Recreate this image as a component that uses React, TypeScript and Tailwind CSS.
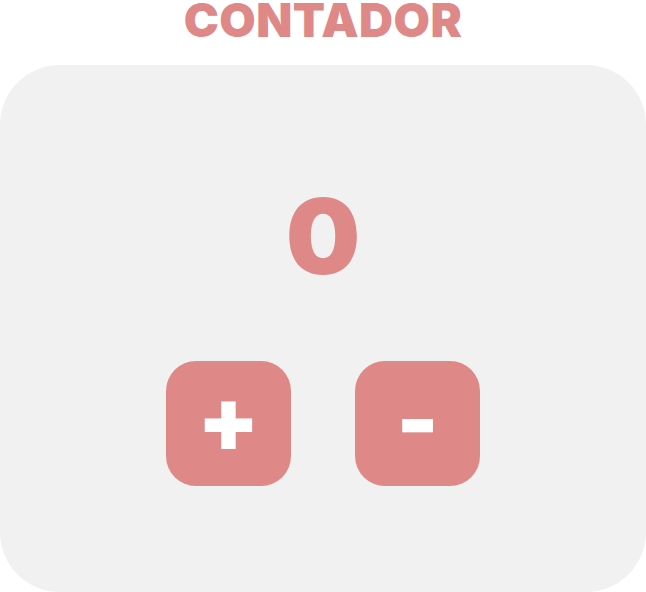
import { useState } from 'react'

export default function App() {
    const [count, setCount] = useState(0)

    return (
        <div className="flex flex-col items-center w-[646px] h-[592px] overflow-hidden bg-white font-['Inter',sans-serif] text-[#df8888]">
            <h1 className="text-[47px] font-black leading-[40px] tracking-[0.01em]">CONTADOR</h1>

            <div className="mt-[25px] w-full h-[527px] shrink-0 rounded-[60px] bg-[#f1f1f1] flex flex-col items-center">
                <div className="mt-[118px] text-[105px] font-black leading-[105px]">{count}</div>

                <div className="mt-[73px] flex gap-[64px]">
                    <button
                        onClick={() => setCount(count + 1)}
                        className="w-[125px] h-[125px] pb-[8px] rounded-[30px] bg-[#df8888] text-white text-[90px] font-black leading-none flex items-center justify-center"
                    >
                        +
                    </button>
                    <button
                        onClick={() => setCount(count - 1)}
                        className="w-[125px] h-[125px] pb-[8px] rounded-[30px] bg-[#df8888] text-white text-[90px] font-black leading-none flex items-center justify-center"
                    >
                        -
                    </button>
                </div>
            </div>
        </div>
    )
}
